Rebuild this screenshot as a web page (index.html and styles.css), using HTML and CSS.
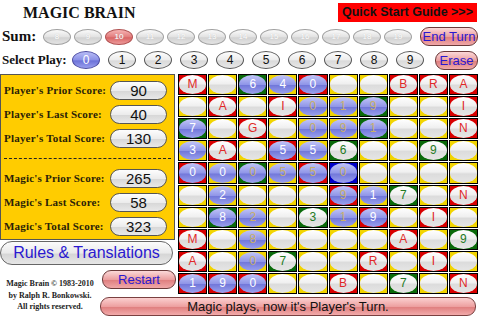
FILE: index.html
```html
<!DOCTYPE html>
<html lang="en">
<head>
    <meta charset="UTF-8">
    <title>Magic Brain</title>
    <link rel="stylesheet" href="styles.css">
</head>
<body>
    <div class="top">
        <div class="title">MAGIC BRAIN</div>
        <div class="guide">Quick Start Guide &gt;&gt;&gt;</div>
    </div>

    <div class="sumrow">
        <div class="label sumlabel">Sum:</div>
        <div class="sums" id="sums"></div>
        <button class="redbtn endturn">End Turn</button>
    </div>

    <div class="playrow">
        <div class="label playlabel">Select Play:</div>
        <div class="plays" id="plays"></div>
        <button class="redbtn erase">Erase</button>
    </div>

    <div class="main">
        <div class="panel">
            <div class="score"><span>Player's Prior Score:</span><b>90</b></div>
            <div class="score"><span>Player's Last Score:</span><b>40</b></div>
            <div class="score"><span>Player's Total Score:</span><b>130</b></div>
            <div class="sep"></div>
            <div class="score"><span>Magic's Prior Score:</span><b>265</b></div>
            <div class="score"><span>Magic's Last Score:</span><b>58</b></div>
            <div class="score"><span>Magic's Total Score:</span><b>323</b></div>
        </div>
        <div class="rules"><button class="graybtn">Rules &amp; Translations</button></div>
        <div class="restart"><button class="redbtn">Restart</button></div>
        <div class="copy">Magic Brain © 1983-2010<br>by Ralph R. Bonkowski.<br>All rights reserved.</div>
        <div class="status">Magic plays, now it's Player's Turn.</div>
        <div class="board" id="board"></div>
    </div>

    <script>
        // sum buttons 8..19, 10 is the current one
        let sums = document.getElementById("sums");
        for (let n = 8; n <= 19; n++) {
            sums.innerHTML += `<span class="sum${n == 10 ? ' on' : ''}">${n}</span>`;
        }

        let plays = document.getElementById("plays");
        for (let n = 0; n <= 9; n++) {
            plays.innerHTML += `<span class="play${n == 0 ? ' on' : ''}">${n}</span>`;
        }

        // corner colour + kind + char
        // L = red letter, G = green number, W = blue pill white text, F = blue pill faded text, - = empty
        let rows = [
            "rLM y- gW6 yW4 rW0 y- y- rLB rLR rLA",
            "y- rLA y- rLI yF0 yF1 gF9 y- y- rLI",
            "gW7 y- rLG y- yF0 yF9 gF1 y- y- rLN",
            "yW3 rLA y- rW5 yW5 gG6 y- y- gG9 y-",
            "rW0 yW0 gF0 yF5 rF5 bF0 y- y- y- y-",
            "y- yW2 y- y- y- rF9 yW1 gG7 y- rLN",
            "y- gW8 yF2 y- gG3 yF1 rW9 y- rLI y-",
            "rLM y- yF8 y- y- y- y- rLA y- gG9",
            "rLA y- yF0 gG7 y- y- rLR y- rLI y-",
            "rW1 rW9 rW0 y- y- rLB y- gG7 y- rLN"
        ];
        let board = document.getElementById("board");
        rows.forEach(row => {
            row.split(" ").forEach(t => {
                let kind = t[1];
                let ch = t.length > 2 ? t[2] : "";
                board.innerHTML += `<div class="cell c-${t[0]}"><span class="pill k-${kind == '-' ? 'E' : kind}">${ch}</span></div>`;
            });
        });
    </script>
</body>
</html>
```

FILE: styles.css
```css
body {
    margin: 0;
    width: 480px;
    height: 320px;
    overflow: hidden;
    background: #fff;
    font-family: "Liberation Sans", Arial, sans-serif;
    color: #111;
}
button {
    font-family: "Liberation Sans", Arial, sans-serif;
    padding: 0;
    cursor: pointer;
    white-space: nowrap;
}
.top {
    height: 25px;
    display: flex;
    align-items: center;
}
.title {
    font-family: "Liberation Serif", "Times New Roman", serif;
    font-weight: bold;
    font-size: 16px;
    margin-left: 23px;
}
.guide {
    margin-left: auto;
    margin-right: 3px;
    width: 139px;
    height: 19px;
    line-height: 19px;
    background: #ff0000;
    color: #111;
    font-weight: bold;
    font-size: 12.5px;
    text-align: center;
    white-space: nowrap;
}
.label {
    font-family: "Liberation Serif", "Times New Roman", serif;
    font-weight: bold;
    padding-left: 2px;
}
.sumrow {
    height: 23px;
    display: flex;
    align-items: center;
}
.sumlabel {
    font-size: 15px;
    width: 41px;
}
.sums {
    display: flex;
    gap: 3px;
}
.sum {
    width: 26px;
    height: 14px;
    border: 1px solid #a0a0a0;
    border-radius: 50%;
    background: linear-gradient(#fafafa, #e2e2e2 50%, #d2d2d2 55%, #e4e4e4);
    color: #fff;
    font-size: 8px;
    line-height: 14px;
    text-align: center;
    text-shadow: 0 0 1px #bbb;
}
.sum.on {
    border-color: #b05050;
    background: linear-gradient(#f6b4b4, #e27c7c 50%, #d86464 55%, #ee9c9c);
}
.redbtn {
    border: 1px solid #6a3a3a;
    border-radius: 9px;
    background: linear-gradient(#fbd8d8, #eba0a0 50%, #df8080 55%, #f0a8a8);
    color: #2a18d0;
    font-size: 13px;
}
.endturn {
    margin-left: auto;
    margin-right: 2px;
    width: 58px;
    height: 19px;
}
.playrow {
    height: 24px;
    display: flex;
    align-items: center;
}
.playlabel {
    font-size: 13px;
    width: 70px;
}
.plays {
    display: flex;
    gap: 8px;
}
.play {
    width: 26px;
    height: 16px;
    border: 1px solid #555;
    border-radius: 50%;
    background: linear-gradient(#fdfdfd, #ececec 50%, #dadada 55%, #e8e8e8);
    font-size: 12px;
    line-height: 16px;
    text-align: center;
}
.play.on {
    border-color: #4a4aa0;
    background: linear-gradient(#b8bcf6, #8a90e6 50%, #6c72d8 55%, #9aa0ee);
    color: #fff;
}
.erase {
    margin-left: auto;
    margin-right: 2px;
    width: 43px;
    height: 19px;
}
.main {
    margin-top: 2px;
    display: grid;
    grid-template-columns: 100px 78px 300px;
    grid-template-rows: 166px 28px 26px 26px;
    grid-template-areas:
        "panel panel board"
        "rules rules board"
        "copy restart board"
        "copy status status";
}
.panel {
    grid-area: panel;
    width: 175px;
    box-sizing: border-box;
    border: 1px solid #555;
    background: #ffcc00;
    padding-top: 3px;
}
.score {
    height: 24px;
    display: flex;
    align-items: center;
    padding-left: 3px;
}
.score span {
    font-family: "Liberation Serif", "Times New Roman", serif;
    font-weight: bold;
    font-size: 11px;
    color: #2a2208;
    width: 106px;
    letter-spacing: 0.2px;
}
.score b {
    width: 55px;
    height: 17px;
    border: 1px solid #555;
    border-radius: 10px;
    background: linear-gradient(#fdfdfd, #ececec 50%, #d8d8d8 55%, #e8e8e8);
    font-weight: normal;
    font-size: 15px;
    line-height: 17px;
    text-align: center;
}
.sep {
    height: 16px;
    margin: 0 3px;
    border-top: 1px dashed #222;
    box-sizing: border-box;
    transform: translateY(8px);
}
.rules {
    grid-area: rules;
    padding-top: 1px;
}
.graybtn {
    width: 173px;
    height: 24px;
    border: 1px solid #666;
    border-radius: 12px;
    background: linear-gradient(#fbfbfb, #eaeaea 50%, #d6d6d6 55%, #e6e6e6);
    color: #2a18d0;
    font-size: 16px;
}
.restart {
    grid-area: restart;
    padding-top: 2px;
}
.restart button {
    margin-left: 2px;
    width: 74px;
    height: 19px;
}
.copy {
    grid-area: copy;
    padding-top: 10px;
    font-family: "Liberation Serif", "Times New Roman", serif;
    font-weight: bold;
    font-size: 8px;
    line-height: 11.5px;
    text-align: center;
    color: #222;
}
.status {
    grid-area: status;
    margin: 3px 2px 4px 0;
    border: 1px solid #7a4040;
    border-radius: 9px;
    background: linear-gradient(#fbd0d0, #eda0a0 50%, #e08080 55%, #f2aaaa);
    font-size: 13px;
    line-height: 17px;
    text-align: center;
}
.board {
    grid-area: board;
    display: grid;
    grid-template-columns: repeat(10, 1fr);
    grid-template-rows: repeat(10, 1fr);
    gap: 1px;
}
.cell {
    border: 1px solid #000;
    display: flex;
}
.c-y { background: #f2d400; }
.c-r { background: #d80000; }
.c-g { background: #0a6a0a; }
.c-b { background: #0000c8; }
.pill {
    flex: 1;
    border-radius: 50%;
    font-size: 12px;
    line-height: 19px;
    text-align: center;
    background: linear-gradient(#ffffff, #f0f0f0 45%, #dcdcdc 55%, #e6e6e6);
}
.k-L { color: #e02828; }
.k-G { color: #237a23; }
.k-W, .k-F {
    background: linear-gradient(#c2c6f8, #9096e8 50%, #7278da 55%, #9ca2ee);
}
.k-W { color: #fff; }
.k-F { color: #c9b06a; }
```
